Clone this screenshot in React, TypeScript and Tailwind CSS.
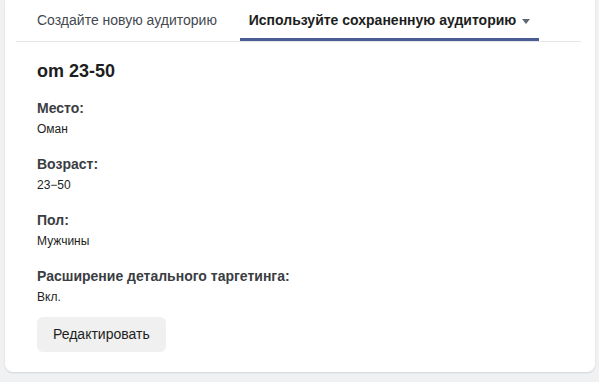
const rows = [
  { label: "Место:", value: "Оман" },
  { label: "Возраст:", value: "23−50" },
  { label: "Пол:", value: "Мужчины" },
  { label: "Расширение детального таргетинга:", value: "Вкл." },
];

export default function App() {
  return (
    <div
      className="min-h-[382px] w-[599px] bg-[#f0f1f2] pl-[5px] pr-[4px]"
      style={{ fontFamily: '"Liberation Sans", Arial, sans-serif' }}
    >
      <div className="rounded-b-lg bg-white pb-5 shadow-[0_1px_2px_rgba(0,0,0,0.12)]">
        <div className="ml-[11px] mr-[14px] flex h-[42px] border-b border-[#e4e6e9]">
          <div className="flex w-[224px] items-center pl-[21px] text-[14px] text-[#444950]">
            Создайте новую аудиторию
          </div>
          <div className="flex h-[41px] w-[299px] items-center justify-center gap-[6px] border-b-[3px] border-[#4b5d93] pt-[3px] text-[14px] font-bold text-[#1c1e21]">
            Используйте сохраненную аудиторию
            <svg width="8" height="5" viewBox="0 0 8 5" className="mt-[1px]">
              <path d="M0 0h8L4 5z" fill="#606770" />
            </svg>
          </div>
        </div>

        <div className="pl-[32px] pt-[17px]">
          <h1 className="text-[18px] font-bold leading-[24px] text-[#1c1e21]">om 23-50</h1>
          <div className="mt-4 flex flex-col gap-[18px]">
            {rows.map((r) => (
              <div key={r.label}>
                <div className="text-[14px] font-bold leading-[18px] text-[#3a3d42]">{r.label}</div>
                <div className="mt-1 text-[12px] leading-[16px] text-[#1c1e21]">{r.value}</div>
              </div>
            ))}
          </div>
          <button className="mt-3 h-[35px] rounded-md bg-[#f0f0f0] px-4 text-[14px] text-[#1c1e21]">
            Редактировать
          </button>
        </div>
      </div>
    </div>
  );
}
